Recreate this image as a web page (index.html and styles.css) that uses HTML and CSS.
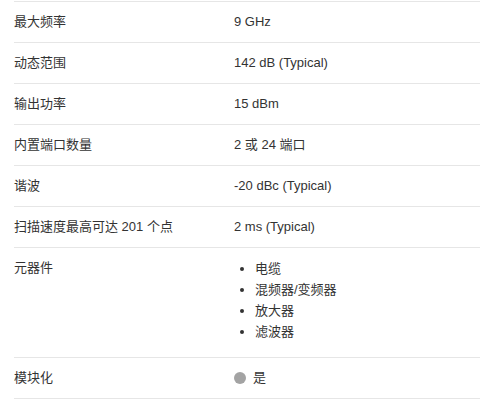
FILE: index.html
```html
<!DOCTYPE html>
<html lang="zh-CN">
<head>
  <meta charset="UTF-8">
  <title>规格</title>
  <link rel="stylesheet" href="styles.css">
</head>
<body>
  <section class="specs">
    <div class="spec-row">
      <div class="spec-label">最大频率</div>
      <div class="spec-value">9 GHz</div>
    </div>
    <div class="spec-row">
      <div class="spec-label">动态范围</div>
      <div class="spec-value">142 dB (Typical)</div>
    </div>
    <div class="spec-row">
      <div class="spec-label">输出功率</div>
      <div class="spec-value">15 dBm</div>
    </div>
    <div class="spec-row">
      <div class="spec-label">内置端口数量</div>
      <div class="spec-value">2 或 24 端口</div>
    </div>
    <div class="spec-row">
      <div class="spec-label">谐波</div>
      <div class="spec-value">-20 dBc (Typical)</div>
    </div>
    <div class="spec-row">
      <div class="spec-label">扫描速度最高可达 201 个点</div>
      <div class="spec-value">2 ms (Typical)</div>
    </div>
    <div class="spec-row">
      <div class="spec-label">元器件</div>
      <div class="spec-value">
        <ul class="spec-list">
          <li>电缆</li>
          <li>混频器/变频器</li>
          <li>放大器</li>
          <li>滤波器</li>
        </ul>
      </div>
    </div>
    <div class="spec-row last">
      <div class="spec-label">模块化</div>
      <div class="spec-value"><span class="dot"></span>是</div>
    </div>
  </section>
</body>
</html>
```

FILE: styles.css
```css
* { margin: 0; padding: 0; box-sizing: border-box; }
body {
  font-family: "Liberation Sans", "Noto Sans CJK SC", sans-serif;
  font-size: 13px;
  color: #333;
  background: #fff;
  padding-top: 1px;
}
.specs {
  margin-left: 14px;
}
.spec-row {
  display: flex;
  border-top: 1px solid #e6e6e6;
  padding: 10px 0;
  line-height: 20px;
}
.spec-row.last {
  border-bottom: 1px solid #e6e6e6;
}
.spec-label {
  width: 220px;
  flex-shrink: 0;
}
.spec-value {
  display: flex;
  align-items: center;
}
.spec-list {
  padding-left: 21px;
  margin-bottom: 5px;
  line-height: 21px;
}
.dot {
  display: inline-block;
  width: 12px;
  height: 12px;
  border-radius: 50%;
  background: #a3a3a3;
  margin-right: 7px;
}
```
